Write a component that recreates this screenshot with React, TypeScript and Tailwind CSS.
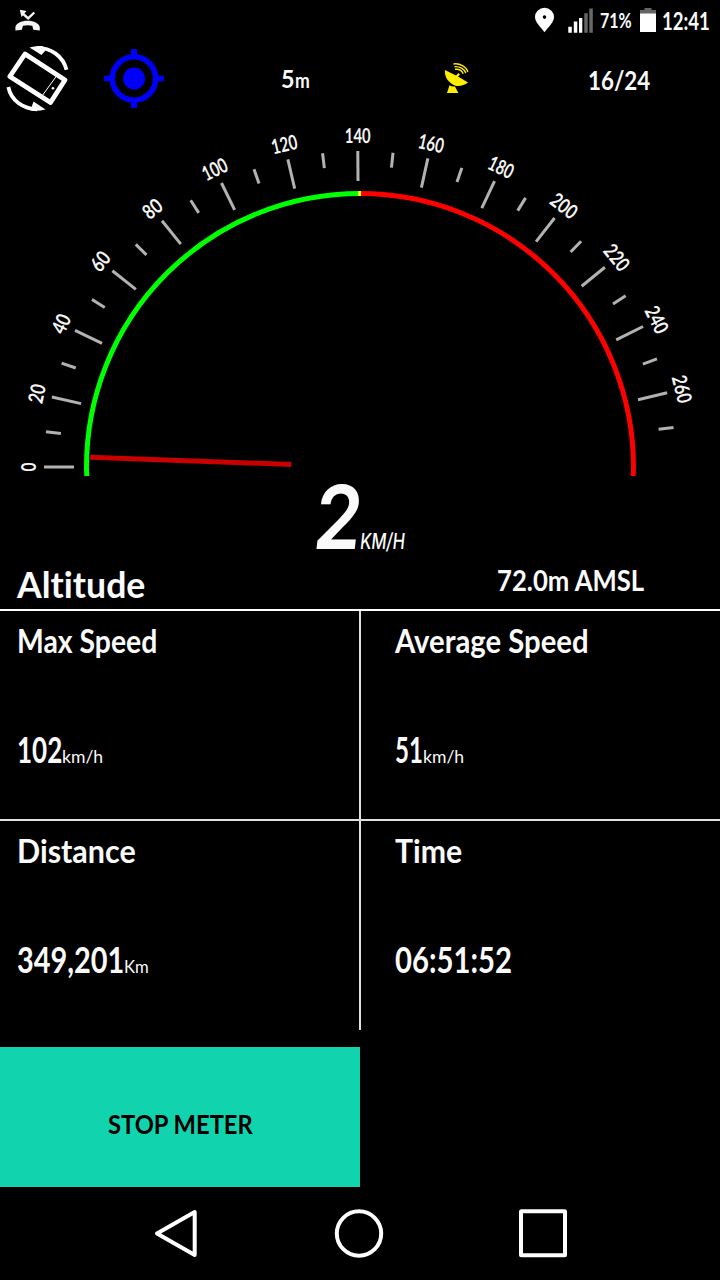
import { useLayoutEffect, useRef, useState } from 'react';

interface FitTextProps {
  text: string;
  className: string;
}

// Condenses or stretches a single line of text so that it fills its box
function FitText({ text, className }: FitTextProps) {
  const boxRef = useRef<HTMLSpanElement>(null);
  const textRef = useRef<HTMLSpanElement>(null);
  const [scale, setScale] = useState(1);

  useLayoutEffect(() => {
    if (boxRef.current && textRef.current) {
      setScale(boxRef.current.offsetWidth / textRef.current.offsetWidth);
    }
  }, [text]);

  return (
    <span ref={boxRef} className={`block shrink-0 ${className}`}>
      <span
        ref={textRef}
        className="inline-block whitespace-nowrap origin-left align-top"
        style={{ transform: `scaleX(${scale})` }}
      >
        {text}
      </span>
    </span>
  );
}

function StatusBar() {
  return (
    <div className="flex h-10 items-start">
      <svg className="ml-3.5 w-7 h-10" viewBox="14 0 28 40" fill="#f4f4f4">
        <path d="M15.400 30.600v-3.400c.6-3.800 6-6.400 12.200-6.400s11.600 2.600 12.200 6.400v3.400l-6.500-.8-1-4c-2.800-.8-6.600-.8-9.400 0l-1 4z" />
        <path d="M19.800 9.800l6.700 1.200-5 6z" />
        <path d="M21.500 12.500L28.200 18.300L34.300 12.500" fill="none" stroke="#f4f4f4" strokeWidth="2.400" />
      </svg>
      <div className="flex-1" />
      <svg className="w-[62px] h-10" viewBox="534 0 62 40">
        <path
          fill="#fff"
          fillRule="evenodd"
          d="M544.500 7.800a9.500 9.300 0 0 1 9.500 9.300c0 5-5.500 10-9.500 15.200c-4-5.200-9.500-10.200-9.500-15.200a9.500 9.300 0 0 1 9.500-9.300zm0 7.500a1.800 1.800 0 1 0 0 3.600a1.800 1.800 0 0 0 0-3.600z"
        />
        <path fill="#fff" d="M568.300 26.800h3.500v6h-3.500zM573.800 21.500h3.500v11.300h-3.500zM579 18h3.300v14.800H579z" />
        <path fill="#666" d="M584.300 13.200h3.400v19.600h-3.400zM589.300 8.500h3.500v24.300h-3.500z" />
      </svg>
      <FitText text="71%" className="ml-[4px] mt-[9px] w-[32px] text-[21px] leading-none" />
      <svg className="ml-2 w-4 h-10" viewBox="640 0 16 40">
        <path fill="#666" d="M644.500 8h7v2h4.500v4h-16v-4h4.500z" />
        <path fill="#fff" d="M640 13.500h16V32h-16z" />
      </svg>
      <FitText text="12:41" className="ml-[6px] mr-[10px] mt-[9px] w-12 text-[24px] leading-none" />
    </div>
  );
}

function Toolbar() {
  return (
    <div className="flex h-[76px] items-start">
      <svg className="ml-1 w-[68px] h-[76px]" viewBox="4 40 68 76">
        <g fill="none" stroke="#fff" strokeLinejoin="round">
          <path d="M25 54L65 80L50.500 102.500L9.800 76.500z" strokeWidth="4.800" />
          <path d="M56.500 76L42 96" strokeWidth="1" />
          <path d="M37 47.800c14 0 26 8.200 29.500 22" strokeWidth="3.800" />
          <path d="M8.300 87c3 14 15 22 29 22.300" strokeWidth="3.800" />
        </g>
        <g fill="#fff">
          <path d="M29.500 47.500Q36 45.300 43 46.200L45 51L41.500 55z" />
          <path d="M45.500 109.500Q38 111.500 31 110.500L32 106L33.500 101.500z" />
          <circle cx="53" cy="88.300" r="1.300" />
        </g>
      </svg>
      <svg className="ml-7 w-[68px] h-[76px]" viewBox="100 40 68 76">
        <circle cx="134" cy="78.500" r="21.700" fill="none" stroke="#0000fa" strokeWidth="5.600" />
        <circle cx="134" cy="78.500" r="11" fill="#0000fa" />
        <path fill="#0000fa" d="M131 49h6v7h-6zM131 101h6v7h-6zM104 75.700h7v5.600h-7zM157 75.700h7v5.600h-7z" />
      </svg>
      <div className="ml-[113px] flex">
        <FitText text="5" className="mt-[26px] w-[14px] text-[25px] leading-none" />
        <FitText text="m" className="mt-[30px] w-[15px] text-[20px] leading-none" />
      </div>
      <svg className="ml-[130px] w-8 h-[76px]" viewBox="440 40 32 76">
        <path fill="#fe0" d="M445 70L456 75.600L458.500 73L460 74.500L458 76.500L468 82.400C464.500 85 460 86.600 455.500 85.700C449 83.500 444 77 445 70zM449.500 85.200Q452 87 455 86.500L458.300 93H447z" />
        <g fill="none" stroke="#fe0" strokeWidth="1.400">
          <path d="M453.500 64c6-1 13 2.500 14.300 8" />
          <path d="M454.500 66.700c5-.5 10 2.300 11.300 6.300" />
          <path d="M455 69.300c4-.5 7 1.500 8.200 4.500" />
        </g>
      </svg>
      <FitText text="16/24" className="ml-[116px] mt-[26px] w-[62px] text-[27px] leading-none" />
    </div>
  );
}

const CENTER_X = 360;
const CENTER_Y = 467;
const TICK_RADIUS = 316;
const DEGREES_PER_TICK = 6.4;

const labelWidth = (value: number) => {
  if (value === 0) return 9;
  if (value < 100) return 19;
  return value < 200 ? 26 : 28;
};

function Speedometer() {
  const ticks = Array.from({ length: 28 }, (_, i) => i);

  return (
    <svg className="block w-[720px] h-[364px]" viewBox="0 116 720 364">
      <defs>
        <clipPath id="dial">
          <rect x="0" y="116" width="720" height="360" />
        </clipPath>
      </defs>
      <g clipPath="url(#dial)" fill="none" strokeWidth="5">
        <path d="M87 482L86.500 467A273.500 273.500 0 0 1 360 193.500" stroke="#00ff00" />
        <path d="M360 193.500A273.500 273.500 0 0 1 633.500 467L633 482" stroke="#ff0000" />
        <path d="M358.300 193.500H361" stroke="#ffff00" />
      </g>
      {ticks.map((i) => {
        const major = i % 2 === 0;
        const top = CENTER_Y - TICK_RADIUS;
        return (
          <g key={i} transform={`rotate(${i * DEGREES_PER_TICK - 90} ${CENTER_X} ${CENTER_Y})`}>
            <line
              x1={CENTER_X}
              x2={CENTER_X}
              y1={top}
              y2={top + (major ? 30 : 15)}
              stroke="#b2b2b2"
              strokeWidth="3"
            />
            {major && (
              <text
                x={CENTER_X}
                y={top - 8}
                textAnchor="middle"
                textLength={labelWidth(i * 10)}
                lengthAdjust="spacingAndGlyphs"
                className="fill-[#f4f4f4] text-[20.500px]"
              >
                {i * 10}
              </text>
            )}
          </g>
        );
      })}
      <path d="M90 457.200L291.300 464.400" stroke="#c80000" strokeWidth="5" />
    </svg>
  );
}

interface StatProps {
  label: string;
  labelClass: string;
  value: string;
  valueClass: string;
  unit?: string;
  unitClass?: string;
}

function Stat({ label, labelClass, value, valueClass, unit, unitClass = '' }: StatProps) {
  return (
    <div className="h-[208px] pt-3.5">
      <FitText text={label} className={`text-[32px] leading-none ${labelClass}`} />
      <div className="mt-[73px] flex">
        <FitText text={value} className={`text-[37px] leading-none ${valueClass}`} />
        {unit && (
          <FitText text={unit} className={`mt-[17px] text-[18px] leading-none font-normal ${unitClass}`} />
        )}
      </div>
    </div>
  );
}

export default function App() {
  return (
    <div className="flex h-[1280px] w-[720px] flex-col overflow-hidden bg-black font-['Lato',sans-serif] font-bold text-[#fafafa] [font-variant-ligatures:none]">
      <StatusBar />
      <Toolbar />
      <Speedometer />

      <div className="flex h-[84px] pl-[314px] pt-[5px] font-['Inter',sans-serif]">
        <div className="-skew-x-6">
          <FitText text="2" className="w-[48px] text-[88px] leading-[64px] font-semibold" />
        </div>
        <div className="-skew-x-6">
          <FitText text="KM/H" className="mt-[44.500px] w-[45px] text-[22px] leading-none font-medium" />
        </div>
      </div>

      <div className="flex h-[47px] border-b-2 border-white pl-[17px]">
        <FitText text="Altitude" className="mt-px w-[128px] text-[37px] leading-none" />
        <FitText text="72.0m AMSL" className="ml-[352px] mt-px w-[147px] text-[29px] leading-none" />
      </div>

      <div className="flex h-[419px]">
        <div className="w-[361px] border-r-2 border-[#e0e0e0]">
          <div className="border-b-2 border-[#e0e0e0] pl-[17px]">
            <Stat label="Max Speed" labelClass="w-[140px]" value="102" valueClass="w-[45px]" unit="km/h" unitClass="w-[41px]" />
          </div>
          <div className="pl-[17px]">
            <Stat label="Distance" labelClass="w-[119px]" value="349,201" valueClass="w-[107px]" unit="Km" unitClass="w-[25px]" />
          </div>
        </div>
        <div className="flex-1">
          <div className="border-b-2 border-[#e0e0e0] pl-[34px]">
            <Stat label="Average Speed" labelClass="w-[194px]" value="51" valueClass="w-[28px]" unit="km/h" unitClass="w-[41px]" />
          </div>
          <div className="pl-[34px]">
            <Stat label="Time" labelClass="w-[67px]" value="06:51:52" valueClass="w-[117px]" />
          </div>
        </div>
      </div>

      <button className="mt-[17px] flex h-[140px] w-[360px] items-center justify-center bg-[#11d4af] text-black">
        <FitText text="STOP METER" className="mt-[14px] w-[145px] text-[26px] leading-none" />
      </button>

      <div className="flex h-[93px] pt-[21px] pl-[153px]">
        <svg className="w-12 h-[50px]" viewBox="153 1208 48 50">
          <path d="M157 1233.500L194.700 1212V1255z" fill="none" stroke="#fff" strokeWidth="4" strokeLinejoin="round" />
        </svg>
        <svg className="ml-[133px] w-[50px] h-[50px]" viewBox="334 1208 50 50">
          <circle cx="359" cy="1233.500" r="22.200" fill="none" stroke="#fff" strokeWidth="4" />
        </svg>
        <svg className="ml-[134px] w-[50px] h-[50px]" viewBox="518 1208 50 50">
          <rect x="521" y="1211.300" width="44" height="44" rx="0.500" fill="none" stroke="#fff" strokeWidth="4" />
        </svg>
      </div>
    </div>
  );
}
